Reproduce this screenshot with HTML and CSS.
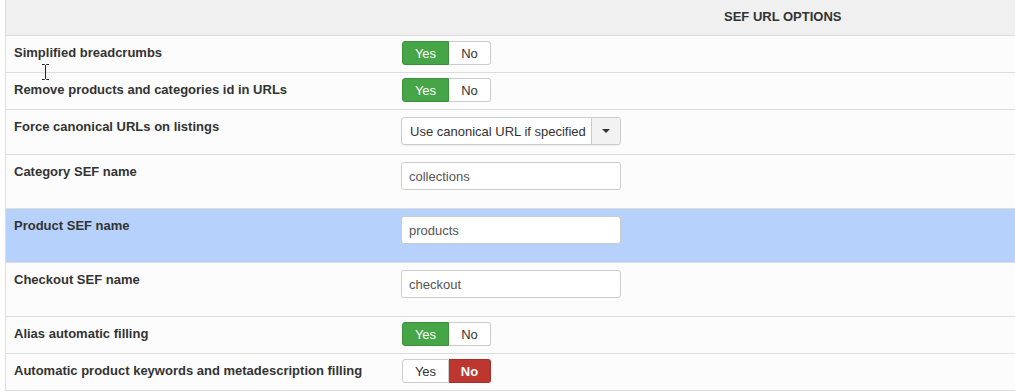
FILE: index.html
```html
<!DOCTYPE html>
<html>
<head>
<meta charset="utf-8">
<link rel="stylesheet" href="styles.css">
</head>
<body>
<div class="table">
  <div class="head"><span class="head-title">SEF URL OPTIONS</span></div>

  <div class="row r36">
    <div class="label">Simplified breadcrumbs</div>
    <div class="ctrl ctrl-toggle">
      <div class="toggle"><span class="btn yes on-green">Yes</span><span class="btn no">No</span></div>
    </div>
  </div>

  <div class="row r36">
    <div class="label">Remove products and categories id in URLs</div>
    <div class="ctrl ctrl-toggle">
      <div class="toggle"><span class="btn yes on-green">Yes</span><span class="btn no">No</span></div>
    </div>
  </div>

  <div class="row r44">
    <div class="label">Force canonical URLs on listings</div>
    <div class="ctrl ctrl-field">
      <div class="select"><span class="select-text">Use canonical URL if specified</span><span class="select-arrow"><span class="caret"></span></span></div>
    </div>
  </div>

  <div class="row r53">
    <div class="label">Category SEF name</div>
    <div class="ctrl ctrl-field"><div class="input">collections</div></div>
  </div>

  <div class="row r53 highlight">
    <div class="label">Product SEF name</div>
    <div class="ctrl ctrl-field"><div class="input">products</div></div>
  </div>

  <div class="row r53">
    <div class="label">Checkout SEF name</div>
    <div class="ctrl ctrl-field"><div class="input">checkout</div></div>
  </div>

  <div class="row r36">
    <div class="label">Alias automatic filling</div>
    <div class="ctrl ctrl-toggle">
      <div class="toggle"><span class="btn yes on-green">Yes</span><span class="btn no">No</span></div>
    </div>
  </div>

  <div class="row r36">
    <div class="label">Automatic product keywords and metadescription filling</div>
    <div class="ctrl ctrl-toggle">
      <div class="toggle"><span class="btn yes">Yes</span><span class="btn no on-red">No</span></div>
    </div>
  </div>

  <svg class="cursor" width="9" height="16" viewBox="0 0 9 16"><path d="M1 0.5h2.5l1 1 1-1H8M4.5 1.5v13M1 15.5h2.5l1-1 1 1H8" fill="none" stroke="#222" stroke-width="1"/></svg>
</div>
</body>
</html>
```

FILE: styles.css
```css
html, body {
  margin: 0;
  padding: 0;
  background: #ffffff;
}
body {
  font-family: "Liberation Sans", Arial, sans-serif;
  font-size: 13px;
  color: #333333;
  overflow: hidden;
}
.table {
  position: relative;
  margin-left: 5px;
  border-left: 1px solid #dddddd;
}
.head {
  background: #f0f0f0;
  border-bottom: 1px solid #dddddd;
  display: flex;
  align-items: center;
  padding-left: 718px;
  box-sizing: border-box;
  height: 36px;
}
.head-title {
  font-weight: bold;
  color: #333333;
  margin-top: -2px;
}
.row {
  display: grid;
  grid-template-columns: 387px 1fr;
  background: #fcfcfc;
  border-bottom: 1px solid #dddddd;
  box-sizing: border-box;
}
.r36 { height: 37px; }
.r44 { height: 45px; }
.r53 { height: 54px; }
.highlight { background: #b5d1fc; }
.label {
  font-weight: bold;
  padding: 8px 0 0 8px;
  line-height: 18px;
  color: #333333;
}
.ctrl {
  padding-left: 8px;
}
.ctrl-toggle { padding-top: 5px; padding-left: 9px; }
.ctrl-field { padding-top: 7px; }
.toggle {
  display: inline-flex;
  height: 24px;
}
.btn {
  box-sizing: border-box;
  height: 24px;
  display: flex;
  align-items: center;
  justify-content: center;
  background: #ffffff;
  border: 1px solid #cccccc;
  color: #333333;
  font-size: 13px;
}
.btn.yes {
  width: 47px;
  border-radius: 3px 0 0 3px;
}
.btn.no {
  width: 42px;
  border-left: none;
  border-radius: 0 3px 3px 0;
}
.btn.on-green {
  background: #46a546;
  border-color: #3d8f3d;
  color: #ffffff;
}
.btn.on-red {
  background: #bd362f;
  border-color: #a52f29;
  color: #ffffff;
  font-weight: bold;
}
.select {
  box-sizing: border-box;
  width: 220px;
  height: 28px;
  display: flex;
  border: 1px solid #cccccc;
  border-radius: 3px;
  background: #ffffff;
  box-shadow: 0 1px 1px rgba(0,0,0,0.05);
}
.select-text {
  flex: 1;
  padding-left: 8px;
  display: flex;
  align-items: center;
  color: #333333;
  font-size: 13px;
}
.select-arrow {
  width: 28px;
  background: #f2f2f2;
  border-left: 1px solid #cccccc;
  display: flex;
  align-items: center;
  justify-content: center;
  border-radius: 0 3px 3px 0;
}
.caret {
  width: 0;
  height: 0;
  border-left: 4px solid transparent;
  border-right: 4px solid transparent;
  border-top: 4px solid #333333;
}
.input {
  box-sizing: border-box;
  width: 220px;
  height: 28px;
  border: 1px solid #cccccc;
  border-radius: 3px;
  background: #ffffff;
  padding-left: 7px;
  display: flex;
  align-items: center;
  color: #555555;
  font-size: 13px;
}
.cursor {
  position: absolute;
  left: 35px;
  top: 64px;
}
```
